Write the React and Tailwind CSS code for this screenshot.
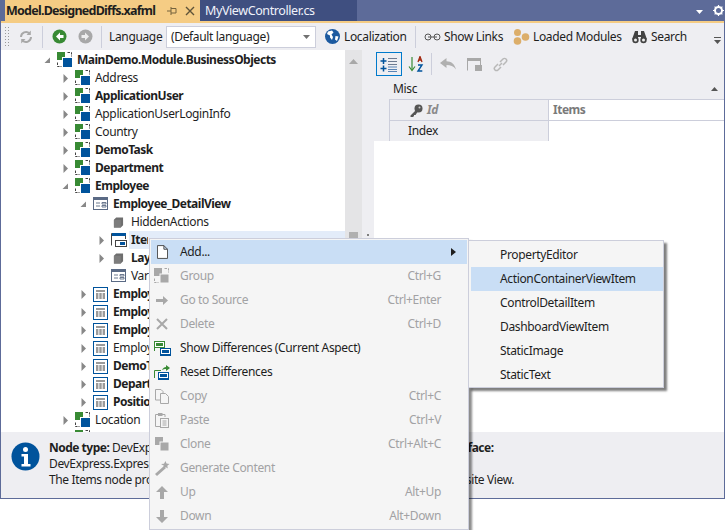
import React from 'react';

// tree icons
const ClassIcon = () => (
  <svg width="16" height="16" viewBox="0 0 16 16" className="shrink-0">
    <rect x="0" y="0" width="8" height="8" fill="#388a34" />
    <rect x="5" y="5" width="10" height="10" fill="#fff" />
    <rect x="6" y="6" width="9" height="9" fill="#00539c" />
    <path d="M10.5 .5H14.5V4.5M.5 10.5V14.5H4.5" fill="none" stroke="#424242" strokeDasharray="2.5 1" />
  </svg>
);

const DetailIcon = () => (
  <svg width="16" height="14" viewBox="0 0 16 14" className="shrink-0">
    <rect x=".5" y=".5" width="14" height="12" fill="#fff" stroke="#5a6a85" />
    <rect x="1" y="1" width="13" height="2" fill="#5a6a85" />
    <path d="M3 6h4M3 9h4M9 5.5h4v1.5h-4zM9 8.5h4v1.5h-4z" fill="none" stroke="#6d7a90" />
  </svg>
);

const ItemsIcon = () => (
  <svg width="16" height="15" viewBox="0 0 16 15" className="shrink-0">
    <path d="M.5 12.5V.5H14.5V6" fill="none" stroke="#424242" />
    <rect x="1" y="0" width="14" height="3" fill="#00539c" />
    <rect x="4.5" y="7.5" width="11" height="6" fill="#fff" stroke="#424242" />
    <rect x="9" y="9" width="5" height="3" fill="#00539c" />
  </svg>
);

const CubeIcon = () => (
  <svg width="11" height="11" viewBox="0 0 12 12" className="shrink-0 mr-[2px]">
    <path d="M1 3L3.5 .5H11V9L8.5 11.5H1z" fill="#6e6e6e" />
    <path d="M1 3H8.5V11.5H1z" fill="#7d7d7d" />
  </svg>
);

const GridIcon = () => (
  <svg width="15" height="15" viewBox="0 0 15 15" className="shrink-0 -ml-px">
    <rect x=".5" y=".5" width="14" height="14" fill="#fff" stroke="#00539c" />
    <path d="M3 3h9v2H3zM3 6h2.4v6H3zM6.3 6h2.4v6H6.3zM9.6 6H12v6H9.6z" fill="#9a9a9a" />
  </svg>
);

const Expander = ({ open }) => (
  <svg width="7" height="9" viewBox="0 0 7 9" className="shrink-0">
    {open ? <path d="M6 1.5V7H.5z" fill="#888" /> : <path d="M1.5 0L6 4.5 1.5 9z" fill="#888" />}
  </svg>
);

const treeIcons = { cls: ClassIcon, det: DetailIcon, itm: ItemsIcon, cube: CubeIcon, grid: GridIcon };

const treeRows = [
  { lvl: 0, icon: 'cls', label: 'MainDemo.Module.BusinessObjects', bold: true, open: true },
  { lvl: 1, icon: 'cls', label: 'Address' },
  { lvl: 1, icon: 'cls', label: 'ApplicationUser', bold: true },
  { lvl: 1, icon: 'cls', label: 'ApplicationUserLoginInfo' },
  { lvl: 1, icon: 'cls', label: 'Country' },
  { lvl: 1, icon: 'cls', label: 'DemoTask', bold: true },
  { lvl: 1, icon: 'cls', label: 'Department', bold: true },
  { lvl: 1, icon: 'cls', label: 'Employee', bold: true, open: true },
  { lvl: 2, icon: 'det', label: 'Employee_DetailView', bold: true, open: true },
  { lvl: 3, icon: 'cube', label: 'HiddenActions', leaf: true },
  { lvl: 3, icon: 'itm', label: 'Items', bold: true, selected: true },
  { lvl: 3, icon: 'cube', label: 'Layout', bold: true },
  { lvl: 3, icon: 'det', label: 'Variants', leaf: true },
  { lvl: 2, icon: 'grid', label: 'Employee_ListView', bold: true },
  { lvl: 2, icon: 'grid', label: 'Employee_LookupListView', bold: true },
  { lvl: 2, icon: 'grid', label: 'Employee_Tasks_ListView', bold: true },
  { lvl: 2, icon: 'grid', label: 'Employee_Variants' },
  { lvl: 2, icon: 'grid', label: 'DemoTask_ListView', bold: true },
  { lvl: 2, icon: 'grid', label: 'Department_ListView', bold: true },
  { lvl: 2, icon: 'grid', label: 'Position_ListView', bold: true },
  { lvl: 1, icon: 'cls', label: 'Location' },
  { lvl: 1, icon: 'cls', label: 'Note' },
];

const TreeRow = ({ row }) => {
  const Icon = treeIcons[row.icon];
  return (
    <div className="h-[18px] flex items-center" style={{ paddingLeft: 43 + row.lvl * 18 }}>
      <div className="w-[13px] flex justify-start shrink-0">{!row.leaf && <Expander open={row.open} />}</div>
      <div className="w-[18px] flex justify-center shrink-0 pr-[2px]">
        <Icon />
      </div>
      <span className={`px-[2px] leading-[18px] whitespace-nowrap text-[#1e1e1e] ${row.bold ? 'font-bold tracking-[-0.5px]' : ''} ${row.selected ? 'bg-[#e3ecf9] flex-1' : ''}`}>
        {row.selected ? <span className="block w-[17px] overflow-hidden">{row.label}</span> : row.label}
      </span>
    </div>
  );
};

const Sep = () => <div className="w-px h-[22px] bg-[#cccedb] shrink-0" />;

const MainToolbar = () => (
  <div className="h-[27px] bg-[#eeeef2] flex items-center relative whitespace-nowrap">
    <div className="w-[6px] h-[21px] ml-[3px] bg-[radial-gradient(#999_1px,transparent_1px)] bg-[length:3px_3px]" />
    <svg width="16" height="16" viewBox="0 0 16 16" className="ml-[8px]">
      <path d="M3 8a5 5 0 0 1 8.5-3.5M13 8a5 5 0 0 1-8.5 3.5" fill="none" stroke="#a8a8a8" strokeWidth="2" />
      <path d="M12.8 1.5V6H8.5zM3.2 14.5V10h4.3z" fill="#a8a8a8" />
    </svg>
    <div className="ml-[8px]"><Sep /></div>
    <svg width="15" height="15" viewBox="0 0 15 15" className="ml-[9px]">
      <circle cx="7.5" cy="7.5" r="7" fill="#388a34" />
      <path d="M8 3.5L4 7.5l4 4V9h3.5V6H8z" fill="#fff" />
    </svg>
    <svg width="15" height="15" viewBox="0 0 15 15" className="ml-[11px]">
      <circle cx="7.5" cy="7.5" r="7" fill="#a8a8a8" />
      <path d="M7 3.5l4 4-4 4V9H3.5V6H7z" fill="#eee" />
    </svg>
    <div className="ml-[8px]"><Sep /></div>
    <span className="ml-[7px] w-[52px]">Language</span>
    <div className="ml-[5px] w-[150px] h-[22px] bg-white border border-[#cccedb] flex items-center justify-between pl-[4px] pr-[5px]">
      <span>(Default language)</span>
      <svg width="7" height="4" viewBox="0 0 7 4"><path d="M0 0h7L3.5 4z" fill="#717171" /></svg>
    </div>
    <svg width="15" height="15" viewBox="0 0 15 15" className="ml-[9px]">
      <circle cx="7.5" cy="7.5" r="7.5" fill="#1c5aa0" />
      <path d="M3 2.5l4-1 1.5 2-2 2 1.5 2.5-1 3-2-2.500V6.500L2 5zM10.500 7l3 .5-1.500 4.500-2-1.500z" fill="#fff" />
    </svg>
    <span className="ml-[4px] w-[63px]">Localization</span>
    <div className="ml-[8px]"><Sep /></div>
    <svg width="17" height="8" viewBox="0 0 17 8" className="ml-[8px]">
      <circle cx="4" cy="4" r="3" fill="none" stroke="#555" />
      <circle cx="13" cy="4" r="3" fill="none" stroke="#555" />
      <path d="M4 4h9" stroke="#555" />
    </svg>
    <span className="ml-[3px] w-[59px]">Show Links</span>
    <svg width="17" height="16" viewBox="0 0 17 16" className="ml-[10px]">
      <circle cx="4.500" cy="3.500" r="3.500" fill="#dcae6a" />
      <circle cx="4.500" cy="12" r="3.800" fill="#dcae6a" />
      <circle cx="12.500" cy="8" r="3.800" fill="#dcae6a" />
    </svg>
    <span className="ml-[3px] w-[88px]">Loaded Modules</span>
    <svg width="15" height="14" viewBox="0 0 15 14" className="ml-[11px]">
      <path d="M3 1h3v4h3V1h3l3 8.500H9V7H6v2.500H0z" fill="#424242" />
      <circle cx="3.500" cy="10" r="3.200" fill="#424242" />
      <circle cx="11.500" cy="10" r="3.200" fill="#424242" />
      <circle cx="3.500" cy="10" r="1.500" fill="#eee" />
      <circle cx="11.500" cy="10" r="1.500" fill="#eee" />
    </svg>
    <span className="ml-[4px]">Search</span>
    <svg width="7" height="8" viewBox="0 0 7 8" className="absolute left-[713px] top-[14px]">
      <path d="M0 0h7v1H0zM0 3h7L3.500 7z" fill="#555" />
    </svg>
  </div>
);

const GridToolbar = () => (
  <div className="h-[28px] flex items-center pl-[2px]">
    <div className="w-[26px] h-[24px] border border-[#007acc] flex items-center justify-center">
      <svg width="18" height="15" viewBox="0 0 18 15">
        <path d="M3.500 1v6M.5 4h6M3.500 8.500v6M.5 11.500h6" stroke="#00539c" strokeWidth="1.500" />
        <path d="M8 1.500h9M8 4.500h9M8 7.500h9" stroke="#6d7a90" />
        <path d="M8 10h9M8 12.500h9M8 14.500h9" stroke="#5a84b5" />
      </svg>
    </div>
    <svg width="16" height="16" viewBox="0 0 16 16" className="ml-[6px]">
      <path d="M4 1v13" stroke="#388a34" strokeWidth="1.200" />
      <path d="M1 10.500l3 4 3-4" fill="none" stroke="#388a34" strokeWidth="1.200" />
      <path d="M10 6l2-5.500L14 6M10.800 4h2.400" fill="none" stroke="#a1260d" strokeWidth="1.300" />
      <path d="M10 9h4l-4 6h4.300" fill="none" stroke="#00539c" strokeWidth="1.400" />
    </svg>
    <div className="ml-[7px]"><Sep /></div>
    <svg width="16" height="12" viewBox="0 0 16 12" className="ml-[8px]">
      <path d="M6.500 0L0 5l6.500 5V7c4 0 7 1 9.500 4.500C14.500 5.500 11 3.500 6.500 3.300z" fill="#b0b0b0" />
    </svg>
    <svg width="15" height="13" viewBox="0 0 15 13" className="ml-[11px]">
      <path d="M.5 12.500V.5h13V7" fill="none" stroke="#a8a8a8" />
      <rect x="0" y="0" width="14" height="3" fill="#a8a8a8" />
      <rect x="8" y="7" width="7" height="6" fill="#a8a8a8" />
    </svg>
    <svg width="15" height="15" viewBox="0 0 15 15" className="ml-[11px]">
      <path d="M6 9l3-3M5 7L2 10a2 2 0 0 0 3 3l3-3M10 8l3-3a2 2 0 0 0-3-3L7 5" fill="none" stroke="#b8b8b8" strokeWidth="1.500" />
    </svg>
  </div>
);

const PropertyGrid = () => (
  <div className="flex-1 flex flex-col bg-white min-w-0">
    <div className="bg-[#eeeef2] h-[91px] pl-0">
      <GridToolbar />
      <div className="h-[21px] flex items-center justify-between pl-[19px] pr-[6px]">
        <span>Misc</span>
        <svg width="7" height="4" viewBox="0 0 7 4"><path d="M0 4h7L3.500 0z" fill="#555" /></svg>
      </div>
      <div className="ml-[15px] border-l border-t border-[#cccedb]">
        <div className="h-[21px] flex border-b border-[#cccedb]">
          <div className="w-[159px] flex items-center pl-[20px] border-r border-[#cccedb] shrink-0">
            <svg width="13" height="13" viewBox="0 0 13 13">
              <circle cx="8.500" cy="4.500" r="4" fill="#555" />
              <path d="M6 6L.5 11.500V13h2.500l1-1v-1h1.500l2-3z" fill="#555" />
              <circle cx="9.500" cy="3.500" r="1" fill="#ccc" />
            </svg>
            <span className="ml-[4px] font-bold italic text-[#8a8a8a]">Id</span>
          </div>
          <div className="flex-1 bg-white flex items-center pl-[4px] font-bold tracking-[-0.5px] text-[#7a7a7a]">Items</div>
        </div>
        <div className="h-[20px] flex">
          <div className="w-[159px] flex items-center pl-[18px] border-r border-[#cccedb] shrink-0">Index</div>
          <div className="flex-1 bg-white" />
        </div>
      </div>
    </div>
  </div>
);

const InfoPanel = () => (
  <div className="h-[66px] bg-[#eeeef2] flex pl-[10px] pt-[9px] shrink-0">
    <svg width="30" height="30" viewBox="0 0 30 30" className="mt-[1px] shrink-0">
      <circle cx="14.500" cy="14.500" r="14" fill="#00539c" />
      <circle cx="14.500" cy="7.500" r="2.500" fill="#fff" />
      <path d="M10.500 12h6.500v10h2.500v2.500h-9V22H13v-7.500h-2.500z" fill="#fff" />
    </svg>
    <div className="ml-[8px] leading-[16px] whitespace-nowrap -mt-[1px]">
      <div><b className="tracking-[-0.5px]">Node type:</b> DevExpress.ExpressApp.Model.NodeGenerators.ViewItemList <b className="tracking-[-0.5px]">Interface:</b></div>
      <div>DevExpress.ExpressApp.Model.IModelViewItems</div>
      <div className="tracking-[-0.375px]">The Items node provides access to the list of View Items that make up a Composite View.</div>
    </div>
  </div>
);

const AddIcon = () => (
  <svg width="11" height="14" viewBox="0 0 12 15"><path d="M.5 .5H7.500L11.500 4.500V14.500H.5zM7.500 .5V4.500H11.500" fill="#fff" stroke="#424242" /></svg>
);
const GroupIcon = () => (
  <svg width="16" height="16" viewBox="0 0 16 16">
    <rect x="0" y="0" width="8" height="8" fill="#a8a8a8" />
    <rect x="6" y="6" width="9" height="9" fill="#a8a8a8" stroke="#f5f5f5" />
    <path d="M10.500 .5H14.500V4.500M.5 10.500V14.500H4.500" fill="none" stroke="#a8a8a8" strokeDasharray="2.500 1" />
  </svg>
);
const SourceIcon = () => (
  <svg width="12" height="9" viewBox="0 0 12 9"><path d="M0 3h7V0l5 4.500L7 9V6H0z" fill="#a8a8a8" /></svg>
);
const DeleteIcon = () => (
  <svg width="12" height="12" viewBox="0 0 12 12"><path d="M1 1l10 10M11 1L1 11" stroke="#a8a8a8" strokeWidth="2" /></svg>
);
const XmlBox = ({ x, y, color }) => (
  <g>
    <rect x={x} y={y} width="10" height="6" fill="#fff" stroke={color} />
    <rect x={x + 1.500} y={y + 1.500} width="7" height="3" fill={color} />
  </g>
);
const DiffIcon = () => (
  <svg width="17" height="15" viewBox="0 0 17 15">
    <XmlBox x={.5} y={.5} color="#388a34" />
    <path d="M.5 7v3" stroke="#388a34" />
    <XmlBox x={6.500} y={7.500} color="#00539c" />
    <rect x="6" y="13.500" width="11" height="1.500" fill="#00539c" />
  </svg>
);
const ResetIcon = () => (
  <svg width="16" height="15" viewBox="0 0 16 15">
    <path d="M.5 13V5.500H7" fill="none" stroke="#388a34" />
    <path d="M8 5c1-2 2.500-3 4-3V0l4 3-4 3V4c-1.500 0-3 .5-4 1z" fill="#388a34" />
    <XmlBox x={4.500} y={7.500} color="#00539c" />
    <rect x="4" y="13.500" width="11" height="1.500" fill="#00539c" />
  </svg>
);
const CopyIcon = () => (
  <svg width="14" height="15" viewBox="0 0 14 15">
    <path d="M.5 .5H6L8 2.500V11H.5z" fill="none" stroke="#a8a8a8" />
    <path d="M5.500 4.500H10.500L13.500 7.500V14.500H5.500z" fill="#f5f5f5" stroke="#a8a8a8" />
  </svg>
);
const PasteIcon = () => (
  <svg width="14" height="15" viewBox="0 0 14 15">
    <path d="M.5 1.500H10V4M5 13.500H.5V1.500" fill="none" stroke="#a8a8a8" />
    <rect x="3" y="0" width="4.500" height="3" fill="#a8a8a8" />
    <rect x="5.500" y="5.500" width="8" height="9" fill="#f5f5f5" stroke="#a8a8a8" />
    <path d="M7.500 8h4M7.500 10h4M7.500 12h4" stroke="#a8a8a8" />
  </svg>
);
const CloneIcon = () => (
  <svg width="14" height="14" viewBox="0 0 14 14">
    <rect x="0" y="0" width="8" height="8" fill="#a8a8a8" />
    <rect x="5" y="5" width="9" height="9" fill="#a8a8a8" stroke="#f5f5f5" />
  </svg>
);
const GenerateIcon = () => (
  <svg width="15" height="15" viewBox="0 0 15 15">
    <path d="M0 13L9 5l2 2-9 8z" fill="#a8a8a8" />
    <path d="M10.500 0l1 2.500 3 .5-2.200 1.800.5 2.700-2.300-1.500-2.300 1.300.7-2.600L6 3l3-.2z" fill="#a8a8a8" />
  </svg>
);
const UpIcon = () => (
  <svg width="12" height="13" viewBox="0 0 12 13"><path d="M6 0l6 6H8v7H4V6H0z" fill="#a8a8a8" /></svg>
);
const DownIcon = () => (
  <svg width="12" height="13" viewBox="0 0 12 13"><path d="M6 13l6-6H8V0H4v7H0z" fill="#a8a8a8" /></svg>
);

const menuItems = [
  { label: 'Add...', Icon: AddIcon, hl: true, sub: true },
  { label: 'Group', Icon: GroupIcon, key: 'Ctrl+G', off: true },
  { label: 'Go to Source', Icon: SourceIcon, key: 'Ctrl+Enter', off: true },
  { label: 'Delete', Icon: DeleteIcon, key: 'Ctrl+D', off: true },
  { label: 'Show Differences (Current Aspect)', Icon: DiffIcon },
  { label: 'Reset Differences', Icon: ResetIcon },
  { label: 'Copy', Icon: CopyIcon, key: 'Ctrl+C', off: true },
  { label: 'Paste', Icon: PasteIcon, key: 'Ctrl+V', off: true },
  { label: 'Clone', Icon: CloneIcon, key: 'Ctrl+Alt+C', off: true },
  { label: 'Generate Content', Icon: GenerateIcon, off: true },
  { label: 'Up', Icon: UpIcon, key: 'Alt+Up', off: true },
  { label: 'Down', Icon: DownIcon, key: 'Alt+Down', off: true },
];

const subItems = ['PropertyEditor', 'ActionContainerViewItem', 'ControlDetailItem', 'DashboardViewItem', 'StaticImage', 'StaticText'];

const ContextMenu = () => (
  <div className="absolute left-[149px] top-[238px] w-[320px] h-[292px] bg-[#f5f5f5] border border-[#cccedb] p-px shadow-[3px_3px_2px_rgba(0,0,0,0.45)]">
    {menuItems.map((item) => (
      <div key={item.label} className={`h-[24px] flex items-center relative ${item.hl ? 'bg-[#c9def5]' : ''} ${item.off ? 'text-[#a2a2a4]' : 'text-[#1e1e1e]'}`}>
        <div className="w-[22px] flex justify-center shrink-0"><item.Icon /></div>
        <span className="ml-[7px] whitespace-nowrap">{item.label}</span>
        {item.key && <span className="absolute right-[26px] whitespace-nowrap">{item.key}</span>}
        {item.sub && (
          <svg width="5" height="8" viewBox="0 0 5 8" className="absolute right-[11px]"><path d="M0 0l5 4-5 4z" fill="#1e1e1e" /></svg>
        )}
      </div>
    ))}
  </div>
);

const SubMenu = () => (
  <div className="absolute left-[468px] top-[240px] w-[196px] h-[148px] bg-[#f5f5f5] border border-[#cccedb] pt-[2px] pl-[2px] shadow-[3px_3px_2px_rgba(0,0,0,0.5)]">
    {subItems.map((s, i) => (
      <div key={s} className={`h-[24px] flex items-center pl-[29px] text-[#1e1e1e] ${i === 1 ? 'bg-[#c9def5]' : ''}`}>
        <span>{s}</span>
      </div>
    ))}
  </div>
);

const App = () => (
  <div className="w-[725px] h-[530px] relative bg-white overflow-hidden text-[12px] leading-[16px] text-[#1e1e1e] font-['Noto_Sans',sans-serif] tracking-[-0.35px]">
    <div className="h-[499px] border-x border-b border-[#5d6b99] flex flex-col">
      <div className="h-[21px] bg-[#5d6b99] flex pl-[4px] shrink-0 relative">
        <div className="w-[195px] bg-[#f5cc84] flex items-center pl-[1px] text-[#1e1e1e] font-bold text-[12.500px] tracking-[-0.75px]">
          <span className="w-[161px] whitespace-nowrap">Model.DesignedDiffs.xafml</span>
          <svg width="10" height="10" viewBox="0 0 10 10" className="shrink-0">
            <path d="M4 1v8M0 5h4M4 2.500h5v4.500H4" fill="none" stroke="#75633d" />
          </svg>
          <svg width="10" height="10" viewBox="0 0 10 10" className="ml-[8px] shrink-0">
            <path d="M1 1l8 8M9 1L1 9" stroke="#5f5339" strokeWidth="1.400" />
          </svg>
        </div>
        <div className="w-[157px] bg-[#3f4f80] flex items-center pl-[5px] text-[#f0f2fa] text-[12.500px] tracking-[-0.4px]">MyViewController.cs</div>
        <svg width="7" height="4" viewBox="0 0 7 4" className="absolute left-[695px] top-[10px]"><path d="M0 0h7L3.500 4z" fill="#fff" /></svg>
        <svg width="11" height="11" viewBox="0 0 11 11" className="absolute left-[712px] top-[5px]">
          <circle cx="5.500" cy="5.500" r="3.500" fill="none" stroke="#fff" strokeWidth="2" />
          <path d="M5.500 0v11M0 5.500h11M1.600 1.600l7.800 7.800M9.400 1.600l-7.800 7.800" stroke="#fff" strokeWidth="1.200" strokeDasharray="2 7 2" />
        </svg>
      </div>
      <div className="h-[2px] bg-[#f5cc84] shrink-0" />
      <MainToolbar />
      <div className="flex-1 flex min-h-0">
        <div className="w-[344px] overflow-hidden bg-white shrink-0 pt-px">
          {treeRows.map((row) => <TreeRow key={row.label} row={row} />)}
        </div>
        <div className="w-[17px] bg-[#e4e4e6] flex flex-col items-center relative shrink-0 pt-[9px]">
          <svg width="9" height="5" viewBox="0 0 9 5"><path d="M0 5h9L4.500 0z" fill="#a8a8a8" /></svg>
          <div className="absolute top-[182px] left-[4px] w-[9px] h-[6px] bg-[#b0b0b0]" />
        </div>
        <div className="w-[12px] bg-[#eeeef2] relative shrink-0">
          <div className="absolute left-[4px] top-[183px] w-[5px] h-[5px] bg-[radial-gradient(#777_0.7px,transparent_0.8px)] bg-[length:4px_4px]" />
        </div>
        <PropertyGrid />
      </div>
      <InfoPanel />
    </div>
    <ContextMenu />
    <SubMenu />
  </div>
);

export default App;
